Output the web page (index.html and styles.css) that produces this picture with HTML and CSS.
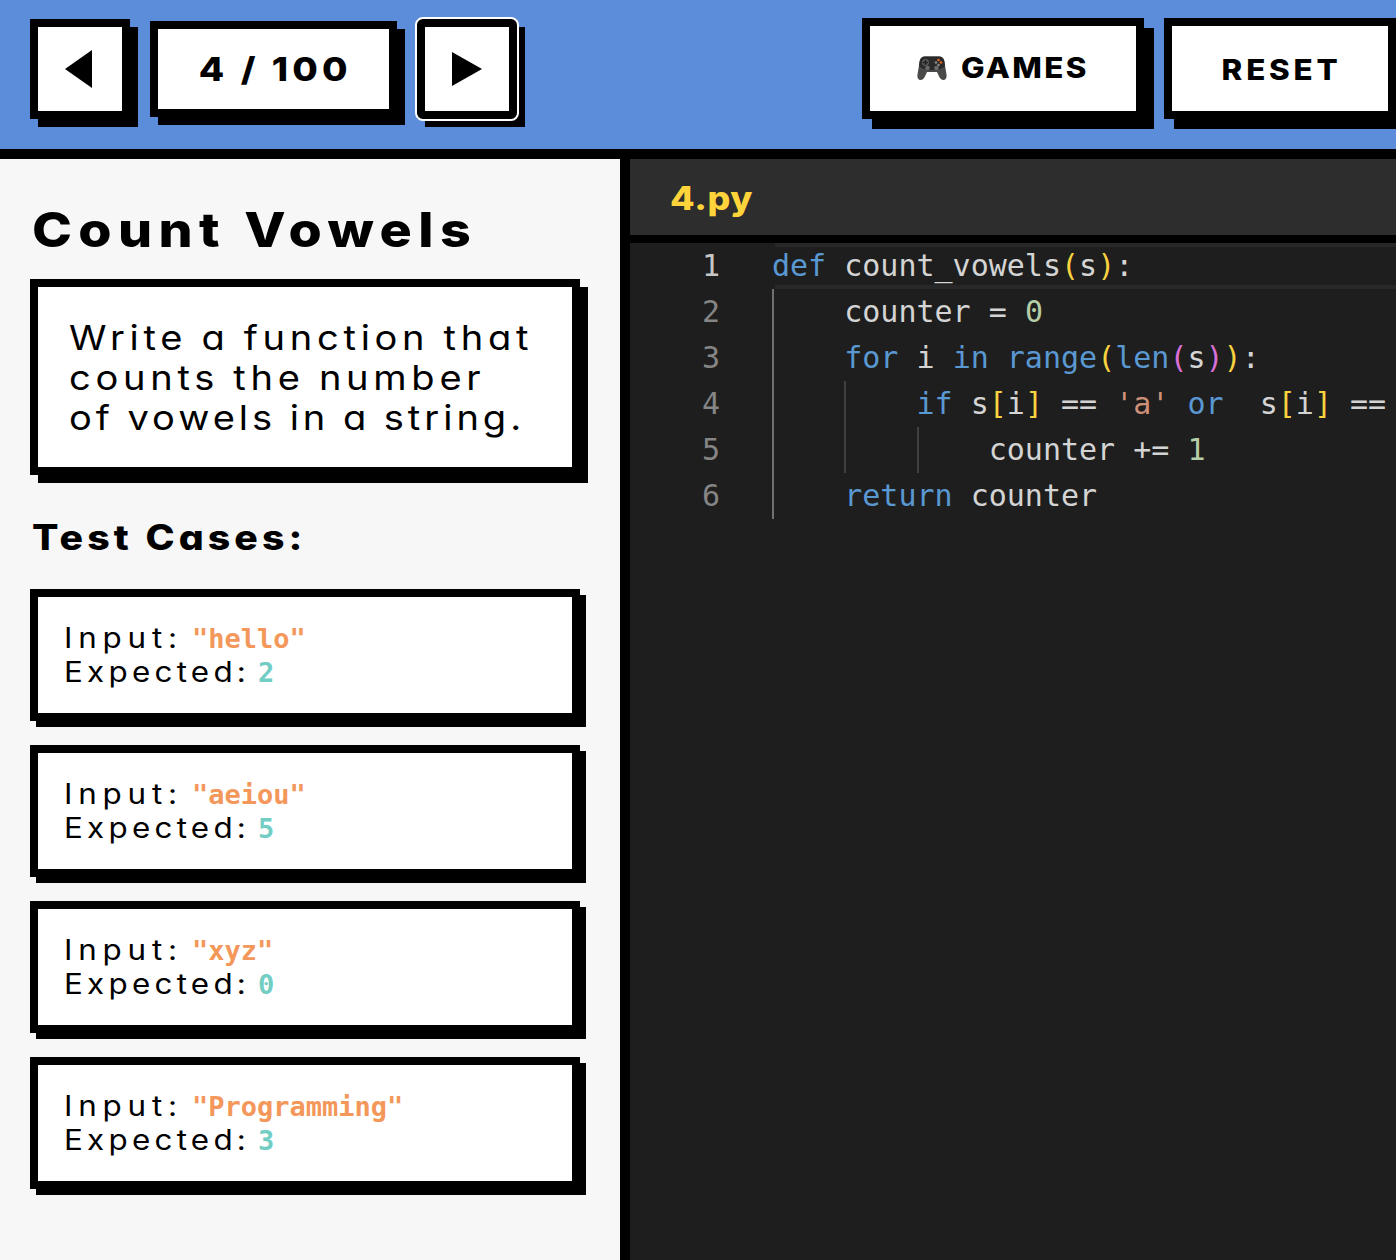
FILE: index.html
```html
<!DOCTYPE html>
<html lang="en">
<head>
<meta charset="utf-8">
<title>Count Vowels</title>
<link rel="stylesheet" href="styles.css">
</head>
<body>
<header class="topbar">
  <div class="nav-group">
    <button class="btn btn-arrow btn-prev" aria-label="Previous"><svg class="arrow" width="28" height="38" viewBox="0 0 28 38"><polygon points="27,0 27,38 0,19"/></svg></button>
    <div class="btn counter"><span class="wide-center">4 / 100</span></div>
    <button class="btn btn-arrow btn-focus" aria-label="Next"><svg class="arrow" width="30" height="34" viewBox="0 0 30 34"><polygon points="0,0 30,17 0,34"/></svg></button>
  </div>
  <div class="action-group">
    <button class="btn btn-action btn-games"><svg class="pad" width="30" height="26" viewBox="0 0 30 26">
      <path d="M8 1.5h14c3 0 4.6 1.6 5.3 4.5l2.2 13.500c.5 3.300-1 5.500-3 5.500-1.800 0-3-1.200-4.300-3.300L20 17H10l-2.200 4.700C6.500 23.800 5.300 25 3.500 25c-2 0-3.500-2.200-3-5.500L2.700 6C3.400 3.100 5 1.500 8 1.500z" fill="#4a4a48"/>
      <path d="M8 1.500h14c3 0 4.600 1.600 5.300 4.500l.7 4.500c-1.500 2.500-5 4.500-13 4.500S3.500 13 2 10.500L2.700 6C3.400 3.100 5 1.500 8 1.500z" fill="#2a2a2a"/>
      <circle cx="8.500" cy="7.500" r="3.400" fill="#5c5c5c"/>
      <path d="M7.700 5h1.600v1.700H11v1.600H9.300V10H7.700V8.300H6V6.700h1.700z" fill="#222"/>
      <circle cx="21.500" cy="5" r="1.300" fill="#e8641e"/><circle cx="24" cy="7.500" r="1.300" fill="#e8641e"/>
      <circle cx="19" cy="7.500" r="1.300" fill="#8a8a8a"/><circle cx="21.500" cy="10" r="1.300" fill="#8a8a8a"/>
      <circle cx="10.500" cy="13" r="2.300" fill="#6a6a6a"/><circle cx="19.500" cy="13" r="2.300" fill="#6a6a6a"/>
    </svg><span class="wide games-label">GAMES</span></button>
    <button class="btn btn-action btn-reset"><span class="wide-center">RESET</span></button>
  </div>
</header>
<main class="workspace">
  <section class="problem">
    <h1 class="problem-title wide">Count Vowels</h1>
    <div class="description"><div class="wide">Write a function that<br>counts the number<br><span class="desc-tight">of vowels in a string.</span></div></div>
    <h2 class="tests-title wide">Test Cases:</h2>
    <div class="tests">
      <div class="case"><div class="case-row"><span class="lbl lbl-in">Input:</span><span class="val-in">"hello"</span></div><div><span class="lbl lbl-out">Expected:</span><span class="val-out">2</span></div></div>
      <div class="case"><div class="case-row"><span class="lbl lbl-in">Input:</span><span class="val-in">"aeiou"</span></div><div><span class="lbl lbl-out">Expected:</span><span class="val-out">5</span></div></div>
      <div class="case"><div class="case-row"><span class="lbl lbl-in">Input:</span><span class="val-in">"xyz"</span></div><div><span class="lbl lbl-out">Expected:</span><span class="val-out">0</span></div></div>
      <div class="case"><div class="case-row"><span class="lbl lbl-in">Input:</span><span class="val-in">"Programming"</span></div><div><span class="lbl lbl-out">Expected:</span><span class="val-out">3</span></div></div>
    </div>
  </section>
  <section class="editor">
    <div class="tab-bar"><span class="tab-name wide">4.py</span></div>
    <div class="code-area">
      <div class="gutter">
        <div class="num num-active">1</div><div class="num">2</div><div class="num">3</div><div class="num">4</div><div class="num">5</div><div class="num">6</div>
      </div>
      <div class="code">
        <div class="active-line"></div>
        <div class="guide guide-1"></div>
        <div class="guide guide-2"></div>
        <div class="guide guide-3"></div>
        <div class="line"><span class="kw">def</span> count_vowels<span class="br1">(</span>s<span class="br1">)</span>:</div>
        <div class="line">    counter = <span class="no">0</span></div>
        <div class="line">    <span class="kw">for</span> i <span class="kw">in</span> <span class="kw">range</span><span class="br1">(</span><span class="kw">len</span><span class="br2">(</span>s<span class="br2">)</span><span class="br1">)</span>:</div>
        <div class="line">        <span class="kw">if</span> s<span class="br1">[</span>i<span class="br1">]</span> == <span class="str">'a'</span> <span class="kw">or</span>  s<span class="br1">[</span>i<span class="br1">]</span> ==</div>
        <div class="line">            counter += <span class="no">1</span></div>
        <div class="line">    <span class="kw">return</span> counter</div>
      </div>
    </div>
  </section>
</main>
</body>
</html>
```

FILE: styles.css
```css
* { box-sizing: border-box; }
html, body { margin: 0; height: 100%; }
body {
  width: 1396px;
  height: 1260px;
  overflow: hidden;
  display: flex;
  flex-direction: column;
  font-family: "Inter", "Lato", sans-serif;
  font-feature-settings: "cv11" 1;
  color: #000;
  background: #f7f7f7;
}

/* the display face is wider than any installed one */
.wide { display: block; transform: scaleX(1.12); transform-origin: left center; }
.wide-center { display: block; transform: scaleX(1.12); }

/* top bar */
.topbar {
  flex: 0 0 159px;
  display: flex;
  justify-content: space-between;
  align-items: center;
  padding: 0 0 11px 30px;
  background: #5b8ddb;
  border-bottom: 10px solid #000;
}
.nav-group, .action-group { display: flex; align-items: center; gap: 20px; }
.action-group { margin-bottom: 1px; }
.btn {
  display: flex;
  align-items: center;
  justify-content: center;
  padding: 0;
  background: #fff;
  border: 8px solid #000;
  border-radius: 0;
  color: #000;
  font-family: inherit;
  font-feature-settings: inherit;
  font-weight: 800;
  box-shadow: 8px 8px 0 #000;
}
.btn-arrow { width: 100px; height: 100px; }
.btn-prev { padding-right: 2px; }
.arrow { display: block; fill: #000; }
.btn-focus { position: relative; }
.btn-focus::after {
  content: "";
  position: absolute;
  inset: -10px;
  border: 2px solid #fff;
  border-radius: 8px;
}
.counter {
  width: 247px;
  height: 96px;
  padding-left: 3px;
  font-size: 33px;
  letter-spacing: 3.7px;
}
.btn-action {
  height: 101px;
  font-size: 28px;
  letter-spacing: 2.1px;
  box-shadow: 10px 10px 0 #000;
}
.btn-games { width: 282px; gap: 14px; padding-bottom: 2px; }
.games-label { width: 128px; text-align: left; }
.pad { display: block; }
.btn-reset { width: 232px; padding-top: 2px; padding-left: 4px; letter-spacing: 3.4px; }

/* layout */
.workspace { flex: 1; display: flex; min-height: 0; }
.problem {
  flex: 0 0 630px;
  padding: 46px 0 0 30px;
  background: #f7f7f7;
  border-right: 10px solid #000;
}
.problem-title {
  margin: 0 0 24px 2px;
  font-size: 48px;
  line-height: 50px;
  font-weight: 800;
  letter-spacing: 5.7px;
}
.description {
  width: 550px;
  height: 196px;
  padding: 31px 0 0 31px;
  background: #fff;
  border: 8px solid #000;
  box-shadow: 8px 8px 0 #000;
  font-size: 34px;
  line-height: 40px;
  font-weight: 400;
  letter-spacing: 4.2px;
  word-spacing: -1px;
}
.desc-tight { letter-spacing: 3.55px; }
.tests-title {
  margin: 42px 0 32px 2px;
  font-size: 35px;
  line-height: 40px;
  font-weight: 800;
  letter-spacing: 3.65px;
}
.tests { display: flex; flex-direction: column; gap: 24px; }
.case {
  width: 550px;
  height: 132px;
  padding: 24px 0 0 26px;
  background: #fff;
  border: 8px solid #000;
  box-shadow: 6px 6px 0 #000;
  font-size: 28px;
  line-height: 34px;
}
.case-row { height: 34px; }
.lbl { display: inline-block; transform: scaleX(1.12); transform-origin: left center; }
.lbl-in { width: 128px; letter-spacing: 5.2px; }
.lbl-out { width: 194px; letter-spacing: 3.8px; }
.val-in, .val-out {
  font-family: "DejaVu Sans Mono", monospace;
  font-size: 27px;
  font-weight: 700;
}
.val-in { color: #f4975a; }
.val-out { color: #72cdc4; }

/* editor */
.editor { flex: 1; min-width: 0; display: flex; flex-direction: column; background: #1e1e1e; }
.tab-bar {
  flex: 0 0 84px;
  display: flex;
  align-items: center;
  padding: 2px 0 0 40px;
  background: #2d2d2d;
  border-bottom: 8px solid #000;
}
.tab-name {
  color: #ffd43b;
  font-size: 32px;
  font-weight: 800;
  letter-spacing: 0.6px;
}
.code-area {
  flex: 1;
  display: flex;
  font-family: "DejaVu Sans Mono", monospace;
  font-size: 30px;
  line-height: 46px;
  overflow: hidden;
}
.gutter { flex: 0 0 142px; padding-right: 52px; text-align: right; color: #858585; }
.num-active { color: #c6c6c6; }
.code { position: relative; flex: 1; min-width: 0; color: #d4d4d4; }
.line { height: 46px; white-space: pre; position: relative; }
.kw { color: #5a98d2; }
.no { color: #b5cea8; }
.str { color: #ce9178; }
.br1 { color: #f8d33f; }
.br2 { color: #da70d6; }
.active-line {
  position: absolute;
  left: 3px;
  right: 0;
  top: 0;
  height: 46px;
  border-top: 4px solid #282828;
  border-bottom: 4px solid #282828;
}
.guide { position: absolute; width: 2px; background: #404040; }
.guide-1 { left: 0; top: 46px; height: 230px; background: #707070; }
.guide-2 { left: 72px; top: 138px; height: 92px; }
.guide-3 { left: 145px; top: 184px; height: 46px; }
```
